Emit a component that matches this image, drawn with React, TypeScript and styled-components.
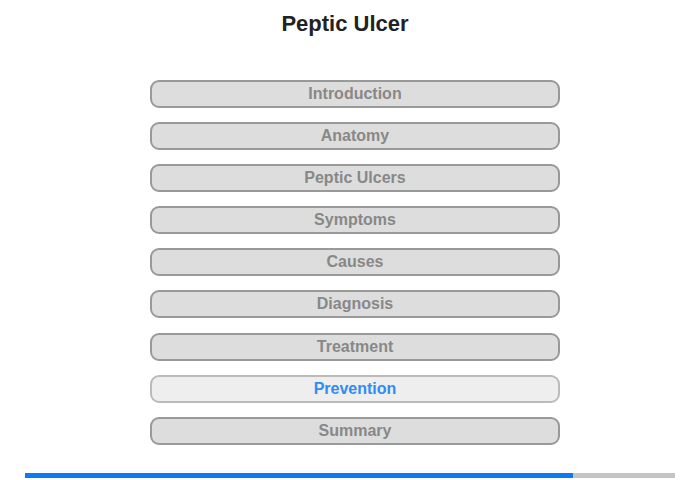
import React from "react";
import styled, { createGlobalStyle } from "styled-components";

const Global = createGlobalStyle`
  html, body { margin: 0; padding: 0; background: #fff; }
  body { font-family: "Liberation Sans", Arial, sans-serif; }
`;

const Page = styled.div`
  width: 700px;
  height: 480px;
  display: flex;
  flex-direction: column;
  align-items: center;
  box-sizing: border-box;
`;

const Title = styled.h1`
  margin: 12px 10px 0 0;
  height: 24px;
  line-height: 24px;
  font-size: 22px;
  font-weight: bold;
  color: #222;
`;

const Menu = styled.nav`
  margin: 44px 0 0 10px;
  display: flex;
  flex-direction: column;
  gap: 14.1px;
`;

const Item = styled.button<{ $active?: boolean }>`
  width: 410px;
  height: 28px;
  box-sizing: border-box;
  border-radius: 9px;
  border: 2px solid ${(p) => (p.$active ? "#bbb" : "#999")};
  background: ${(p) => (p.$active ? "#eee" : "#ddd")};
  color: ${(p) => (p.$active ? "#2f8cf5" : "#888")};
  font-family: "Liberation Sans", Arial, sans-serif;
  font-size: 16px;
  font-weight: bold;
  padding: 0;
  line-height: 24px;
  cursor: pointer;
`;

const Track = styled.div`
  margin-top: 28px;
  width: 650px;
  height: 5px;
  background: #c4c4c4;
  display: flex;
`;

const Fill = styled.div`
  height: 100%;
  background: #0a7cf0;
`;

const items = [
  "Introduction",
  "Anatomy",
  "Peptic Ulcers",
  "Symptoms",
  "Causes",
  "Diagnosis",
  "Treatment",
  "Prevention",
  "Summary",
];

export default function App() {
  return (
    <Page>
      <Global />
      <Title>Peptic Ulcer</Title>
      <Menu>
        {items.map((t) => (
          <Item key={t} $active={t === "Prevention"}>
            {t}
          </Item>
        ))}
      </Menu>
      <Track>
        <Fill style={{ width: `${(548 / 650) * 100}%` }} />
      </Track>
    </Page>
  );
}
